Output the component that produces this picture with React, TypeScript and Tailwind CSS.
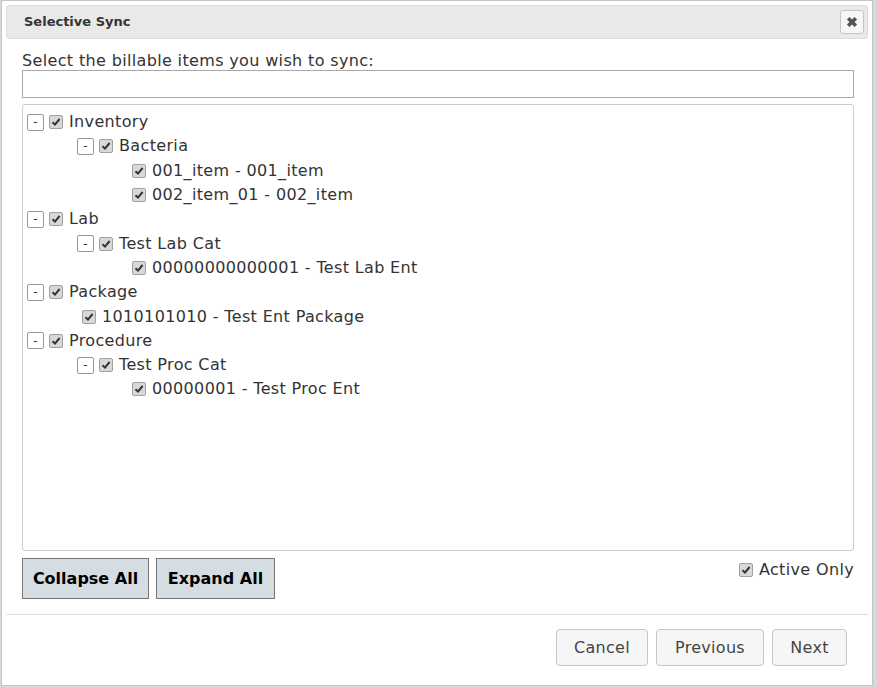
import React from "react";

type Node = {
  label: string;
  children?: Node[];
};

const tree: Node[] = [
  {
    label: "Inventory",
    children: [
      {
        label: "Bacteria",
        children: [{ label: "001_item - 001_item" }, { label: "002_item_01 - 002_item" }],
      },
    ],
  },
  {
    label: "Lab",
    children: [{ label: "Test Lab Cat", children: [{ label: "00000000000001 - Test Lab Ent" }] }],
  },
  { label: "Package", children: [{ label: "1010101010 - Test Ent Package" }] },
  {
    label: "Procedure",
    children: [{ label: "Test Proc Cat", children: [{ label: "00000001 - Test Proc Ent" }] }],
  },
];

function Check() {
  return (
    <span className="inline-flex h-[14px] w-[14px] shrink-0 items-center justify-center rounded-[2px] border border-[#a0a0a0] bg-[#d8d8d8]">
      <svg viewBox="0 0 10 10" className="h-[10px] w-[10px]">
        <path d="M1.5 5.2 L4 7.6 L8.6 2" fill="none" stroke="#333" strokeWidth="2" />
      </svg>
    </span>
  );
}

function Toggle() {
  return (
    <span className="mr-[5px] inline-flex h-[17px] w-[17px] shrink-0 items-center justify-center rounded-[2px] border border-[#999] bg-white text-[12px] leading-none text-[#333]">
      -
    </span>
  );
}

function TreeRow({ node, depth }: { node: Node; depth: number }) {
  const hasKids = !!node.children;
  return (
    <>
      <div
        className="flex h-[24.3px] items-center"
        style={{ paddingLeft: depth * 50 + (hasKids ? 0 : 5) }}
      >
        {hasKids ? <Toggle /> : null}
        <Check />
        <span className="ml-[6px] whitespace-nowrap text-[16px] tracking-[0.35px] text-[#333]">
          {node.label}
        </span>
      </div>
      {node.children?.map((c) => (
        <TreeRow key={c.label} node={c} depth={depth + 1} />
      ))}
    </>
  );
}

export default function App() {
  return (
    <div
      className="h-[687px] w-[877px] overflow-hidden bg-[#d9d9d9]"
      style={{ fontFamily: '"DejaVu Sans", Verdana, sans-serif' }}
    >
      <div className="ml-px mr-[4px] h-[686px] border border-[#c5c5c5] bg-white px-[4px] pt-[4px]">
        <div className="flex h-[34px] items-center justify-between rounded-[3px] border border-[#dddddd] bg-[#e9e9e9] pl-[17px] pr-[3px]">
          <span className="text-[13px] font-bold text-[#333]">Selective Sync</span>
          <button className="flex h-[24px] w-[24px] items-center justify-center rounded-[3px] border border-[#c5c5c5] bg-[#f6f6f6]">
            <svg viewBox="0 0 10 10" className="h-[12px] w-[12px]">
              <path d="M1.8 1.8 L8.2 8.2 M8.2 1.8 L1.8 8.2" stroke="#555" strokeWidth="3" />
            </svg>
          </button>
        </div>

        <div className="pl-[16px] pr-[14px] pt-[13px]">
          <div className="h-[18px] text-[16px] leading-[18px] tracking-[0.35px] text-[#333]">
            Select the billable items you wish to sync:
          </div>
          <input className="block h-[28px] w-full border border-[#a9a9a9] bg-white" />
          <div className="mt-[6px] h-[447px] rounded-[3px] border border-[#cccccc] px-[4px] pt-[5px]">
            {tree.map((n) => (
              <TreeRow key={n.label} node={n} depth={0} />
            ))}
          </div>

          <div className="mt-[7px] flex items-start justify-between">
            <div className="flex gap-[7px]">
              <button className="h-[41px] w-[127px] border border-[#767676] bg-[#d6dde2] text-[16px] font-bold text-black">
                Collapse All
              </button>
              <button className="h-[41px] w-[119px] border border-[#767676] bg-[#d6dde2] text-[16px] font-bold text-black">
                Expand All
              </button>
            </div>
            <div className="flex items-center">
              <Check />
              <span className="ml-[6px] text-[16px] tracking-[0.35px] text-[#333]">Active Only</span>
            </div>
          </div>
        </div>

        <div className="mt-[15px] border-t border-[#dddddd]" />
        <div className="flex justify-end gap-[8px] pr-[21px] pt-[14px]">
          <button className="h-[37px] w-[92px] rounded-[4px] border border-[#c5c5c5] bg-[#f6f6f6] text-[16px] tracking-[0.3px] text-[#454545]">
            Cancel
          </button>
          <button className="h-[37px] w-[108px] rounded-[4px] border border-[#c5c5c5] bg-[#f6f6f6] text-[16px] tracking-[0.3px] text-[#454545]">
            Previous
          </button>
          <button className="h-[37px] w-[75px] rounded-[4px] border border-[#c5c5c5] bg-[#f6f6f6] text-[16px] tracking-[0.3px] text-[#454545]">
            Next
          </button>
        </div>
      </div>
    </div>
  );
}
